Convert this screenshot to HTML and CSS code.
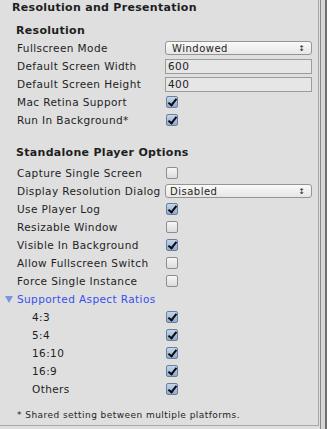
FILE: index.html
```html
<!DOCTYPE html>
<html>
<head>
<meta charset="utf-8">
<link rel="stylesheet" href="styles.css">
</head>
<body>
<div class="window">
  <div class="panel">
    <div class="title">Resolution and Presentation</div>
    <div class="heading first">Resolution</div>
    <div class="row"><span class="label">Fullscreen Mode</span><div class="dropdown"><span>Windowed</span><span class="arrows">&#8597;</span></div></div>
    <div class="row"><span class="label">Default Screen Width</span><div class="field">600</div></div>
    <div class="row"><span class="label">Default Screen Height</span><div class="field">400</div></div>
    <div class="row"><span class="label">Mac Retina Support</span><span class="cb on"></span></div>
    <div class="row"><span class="label">Run In Background*</span><span class="cb on"></span></div>
    <div class="heading second">Standalone Player Options</div>
    <div class="row first-opt"><span class="label">Capture Single Screen</span><span class="cb"></span></div>
    <div class="row"><span class="label">Display Resolution Dialog</span><div class="dropdown tight"><span>Disabled</span><span class="arrows">&#8597;</span></div></div>
    <div class="row"><span class="label">Use Player Log</span><span class="cb on"></span></div>
    <div class="row"><span class="label">Resizable Window</span><span class="cb"></span></div>
    <div class="row"><span class="label">Visible In Background</span><span class="cb on"></span></div>
    <div class="row"><span class="label">Allow Fullscreen Switch</span><span class="cb"></span></div>
    <div class="row"><span class="label">Force Single Instance</span><span class="cb"></span></div>
    <div class="row foldout"><span class="tri"></span><span class="link">Supported Aspect Ratios</span></div>
    <div class="row sub"><span class="label">4:3</span><span class="cb on"></span></div>
    <div class="row sub"><span class="label">5:4</span><span class="cb on"></span></div>
    <div class="row sub"><span class="label">16:10</span><span class="cb on"></span></div>
    <div class="row sub"><span class="label">16:9</span><span class="cb on"></span></div>
    <div class="row sub"><span class="label">Others</span><span class="cb on"></span></div>
    <div class="note">* Shared setting between multiple platforms.</div>
  </div>
  <div class="edge"></div>
</div>
</body>
</html>
```
FILE: styles.css
```css
html, body {
  margin: 0;
  padding: 0;
  background: #dfdfdf;
}
body {
  width: 327px;
  height: 429px;
  overflow: hidden;
  font-family: "DejaVu Sans", sans-serif;
  font-size: 10.5px;
  color: #1e1e1e;
}
.window {
  display: flex;
  height: 429px;
}
.panel {
  width: 320px;
  height: 426px;
  box-sizing: border-box;
  border-right: 1px solid #a9a9a9;
  border-bottom: 1px solid #a9a9a9;
  display: flex;
  flex-direction: column;
}
.edge {
  width: 7px;
  height: 429px;
  box-sizing: border-box;
  margin-left: 1px;
  border-left: 1px solid #8a8a8a;
  border-right: 2px solid #6e6e6e;
  background: #d6d6d6;
}
.title {
  height: 15px;
  line-height: 16px;
  padding-left: 12px;
  font-size: 11px;
  font-weight: bold;
  letter-spacing: 0.3px;
}
.heading {
  height: 14px;
  line-height: 14px;
  padding-left: 16px;
  font-size: 11px;
  font-weight: bold;
  letter-spacing: 0.3px;
}
.heading.first {
  margin-top: 9px;
  margin-bottom: 1px;
}
.heading.second {
  margin-top: 17px;
}
.row.first-opt {
  margin-top: 4px;
}
.row {
  height: 18px;
  display: flex;
  align-items: center;
  padding-left: 17px;
}
.label {
  width: 148px;
  flex: none;
  letter-spacing: 0.4px;
  white-space: nowrap;
}
.sub {
  padding-left: 32px;
}
.sub .label {
  width: 133px;
}
.dropdown {
  width: 147px;
  height: 14px;
  box-sizing: border-box;
  border: 1px solid #959595;
  border-radius: 3px;
  background: linear-gradient(#fafafa, #e6e6e6);
  display: flex;
  align-items: center;
  justify-content: space-between;
  padding: 0 6px 0 6px;
  font-size: 10px;
  letter-spacing: 0.5px;
}
.dropdown.tight {
  padding-left: 4px;
}
.arrows {
  font-size: 8px;
  letter-spacing: 0;
}
.field {
  width: 147px;
  height: 15px;
  box-sizing: border-box;
  border: 1px solid #9c9c9c;
  background: #e6e6e6;
  line-height: 13px;
  padding-left: 2px;
  letter-spacing: 0.4px;
}
.cb {
  width: 12px;
  height: 12px;
  box-sizing: border-box;
  margin-left: 1px;
  border: 1px solid #8d8d8d;
  border-radius: 2px;
  background: linear-gradient(#f6f6f6, #dcdcdc);
  position: relative;
}
.cb.on {
  border-color: #6d7f99;
  background: linear-gradient(#c4d6ee, #8eaad2);
}
.cb.on::after {
  content: "";
  position: absolute;
  left: 3px;
  top: 0px;
  width: 3px;
  height: 7px;
  border-right: 2px solid #0b0b0b;
  border-bottom: 2px solid #0b0b0b;
  transform: rotate(38deg);
}
.foldout {
  padding-left: 5px;
}
.tri {
  width: 0;
  height: 0;
  border-left: 4px solid transparent;
  border-right: 4px solid transparent;
  border-top: 7px solid #7a95e6;
  margin-right: 4px;
}
.link {
  color: #3550f0;
  letter-spacing: 0.4px;
}
.note {
  margin-top: 10px;
  height: 14px;
  line-height: 14px;
  padding-left: 17px;
  font-size: 9px;
  letter-spacing: 0.45px;
}
```
